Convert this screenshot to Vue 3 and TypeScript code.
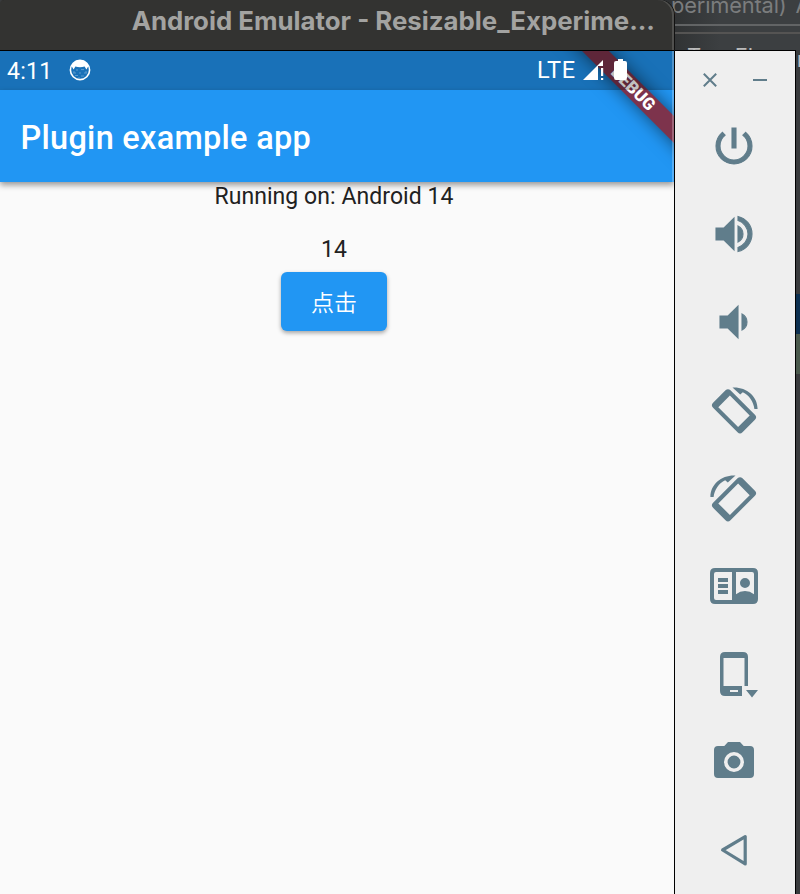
<script setup lang="ts">
interface Tool { name: string; kind: string; path?: string }

const tools: Tool[] = [
  { name: 'Power', kind: 'bold', path: 'M26 6h-4v20h4V6zm9.66 4.34-2.84 2.84C35.98 15.72 38 19.62 38 24c0 7.74-6.26 14-14 14s-14-6.26-14-14c0-4.38 2.02-8.28 5.16-10.84l-2.82-2.82C8.46 13.64 6 18.52 6 24c0 9.94 8.06 18 18 18s18-8.06 18-18c0-5.48-2.46-10.36-6.34-13.66z' },
  { name: 'Volume up', kind: 'bold', path: 'M6 18v12h8l10 10V8L14 18H6zm27 6c0-3.53-2.04-6.58-5-8.05v16.11c2.96-1.48 5-4.53 5-8.06zM28 6.46v4.13c5.78 1.72 10 7.07 10 13.41s-4.22 11.69-10 13.41v4.13c8.01-1.82 14-8.97 14-17.54S36.01 8.28 28 6.46z' },
  { name: 'Volume down', kind: 'bold', path: 'M37 24c0-3.53-2.04-6.58-5-8.05v16.11c2.96-1.48 5-4.53 5-8.06zM10 18v12h8l10 10V8L18 18h-8z' },
  { name: 'Rotate left', kind: 'rotate' },
  { name: 'Rotate right', kind: 'rotate mirrored' },
  { name: 'Display mode', kind: 'plain', path: 'M5 6H43Q48 6 48 11V37Q48 42 43 42H5Q0 42 0 37V11Q0 6 5 6zM6 10Q4 10 4 12V36Q4 38 6 38H22V10zM26 10V32.2Q30 29 35 29Q40 29 44 32.2V12Q44 10 42 10zM8 16H18V20H8zM8 22H18V26H8zM8 28H18V32H8zM35 16A5 5 0 1 1 35 26A5 5 0 1 1 35 16z' },
  { name: 'Device', kind: 'plain', path: 'M15 2H33Q38 2 38 7V36H34.5V8H13.5V36H32V46H15Q10 46 10 41V7Q10 2 15 2zM20 40V42H28V40zM36 40H48L42 47.5z' },
  { name: 'Camera', kind: 'plain', path: 'M18 4H30L33.7 8H40Q44 8 44 12V36Q44 40 40 40H8Q4 40 4 36V12Q4 8 8 8H14.3zM24 14A10 10 0 1 0 24 34A10 10 0 1 0 24 14zM24 17.6A6.4 6.4 0 1 1 24 30.4A6.4 6.4 0 1 1 24 17.6z' },
  { name: 'Back', kind: 'outline', path: 'M12.6 24L35.2 10.6V37.9z' },
]
</script>

<template>
  <div class="desktop">
    <div class="ide-back">
      <div class="ide-title">perimental) A</div>
      <div class="ide-rule"></div>
      <div class="ide-rule second"></div>
      <div class="ide-menu"><span>Tex</span><span>Fl</span></div>
    </div>
    <section class="emulator">
      <header class="titlebar">Android Emulator - Resizable_Experime...</header>
      <div class="screen">
        <div class="status">
          <span class="clock">4:11</span>
          <svg class="cat" viewBox="0 0 22 22">
            <circle cx="11" cy="11" r="9.6" fill="none" stroke="#fff" stroke-width="1.6" />
            <path d="M2.5 7Q5 1 11 1T19.5 7L17.4 10.5L15.6 7.4Q11 9 6.4 7.4L4.6 10.5z" fill="#fff" />
            <path d="M5 12v2M17 12v2M7 11h2M12 10.6h3M4 14h3M10 14h2M15 14h3M6 16.5h3M12 17h3M9 19h2" stroke="#6ba5d3" stroke-width=".8" />
          </svg>
          <span class="lte">LTE</span>
          <svg class="signal" viewBox="0 0 22 21">
            <path d="M0 20L20 0V6H15V20z" fill="#fff" /><path d="M18 8h2.2v8H18zM18 18h2.2v2H18z" fill="#fff" />
          </svg>
          <svg class="battery" viewBox="0 0 14 21"><path d="M4 0H9V2H11Q13 2 13 4V18.5Q13 21 11 21H2Q0 21 0 18.5V4Q0 2 2 2H4z" fill="#fff" /></svg>
        </div>
        <div class="appbar">Plugin example app</div>
        <main class="content">
          <p class="running">Running on: Android 14</p>
          <p class="version">14</p>
          <button class="click">点击</button>
        </main>
        <div class="ribbon"><span>DEBUG</span></div>
        <div class="edge"></div>
      </div>
    </section>
    <aside class="toolbar">
      <div class="window-actions">
        <svg viewBox="0 0 14 14"><path d="M.8.8 13.2 13.2M13.2.8.8 13.2" /></svg>
        <svg viewBox="0 0 14 14"><path d="M0 7H14" /></svg>
      </div>
      <div class="tools">
        <svg v-for="t in tools" :key="t.name" :class="['tool', t.kind]" viewBox="0 0 48 48">
          <path v-if="t.path" :d="t.path" fill-rule="evenodd" />
          <template v-else>
            <g transform="translate(24 25.3) rotate(45)">
              <path fill-rule="evenodd" d="M-17.3-12.3H17.3Q20.8-12.3 20.8-8.8V8.8Q20.8 12.3 17.3 12.3H-17.3Q-20.8 12.3-20.8 8.8V-8.8Q-20.8-12.3-17.3-12.3zM-14-8.2V8.2H14V-8.2z" />
            </g>
            <path d="M22.5 1.6C36 .8 47.5 10 47.6 23H44.4C43.6 15.5 39 9 32.8 6.2L30.2 8.6z" />
          </template>
        </svg>
      </div>
    </aside>
    <div class="ide-side">
      <span class="letter">r</span>
      <div class="selected"></div>
      <div class="added"></div>
    </div>
  </div>
</template>

<style>
body { margin: 0; overflow: hidden; }
</style>

<style scoped>
.desktop { position: relative; display: grid; grid-template-columns: 674px 122px 4px; width: 800px; height: 894px; background: #393b3d; overflow: hidden; font-family: Roboto, sans-serif; }
.ide-back { position: absolute; left: 660px; top: 0; width: 140px; height: 51px; overflow: hidden; background: linear-gradient(90deg, #2d2f30, #3c3f41 60px); }
.ide-title { height: 24px; padding-left: 11px; font: 21.8px/10px Inter, sans-serif; letter-spacing: -.15px; word-spacing: 3px; color: #7b7d7e; white-space: nowrap; }
.ide-rule { height: 2px; background: #626465; }
.ide-rule.second { margin-top: 6px; background: #555453; }
.ide-menu { display: flex; gap: 11px; padding: 10px 0 0 27px; font: 22px/24px Inter, sans-serif; color: #bbb; }
.emulator { position: relative; z-index: 1; height: 894px; display: flex; flex-direction: column; }
.titlebar { box-sizing: border-box; height: 51px; padding: 0 19px 9px 0; border-bottom: 1px solid #000; border-radius: 4px 15px 0 0; box-shadow: inset -2px 0 #50504e, 1px 0 #111; background: #333331; color: #a3a3a1; font: 700 25.8px/41px Inter, sans-serif; text-align: right; white-space: nowrap; }
.screen { position: relative; flex: 1; overflow: hidden; background: linear-gradient(#2196f3 50px, #fafafa 50px); }
.status { position: relative; z-index: 3; display: flex; align-items: center; height: 39px; box-sizing: border-box; padding: 0 46px 0 7px; background: rgba(0, 0, 0, .245); color: #fff; font-size: 23px; }
.clock { width: 62px; padding-top: 1px; letter-spacing: .3px; }
.cat { width: 22px; height: 22px; margin-bottom: 1px; }
.lte { margin-left: auto; width: 46px; padding-bottom: 1px; font-size: 23.5px; letter-spacing: .6px; }
.signal { width: 22px; height: 21px; margin-right: 9px; }
.battery { width: 14px; height: 21px; margin-bottom: 2px; }
.appbar { position: relative; height: 92px; box-sizing: border-box; padding-left: 20.5px; background: #2196f3; color: #fff; font-size: 32.5px; line-height: 96px; font-weight: 500; letter-spacing: .27px; box-shadow: 0 3px 6px rgba(0, 0, 0, .4); }
.content { display: flex; flex-direction: column; align-items: center; width: 668px; padding-top: 1px; color: #212121; font-size: 23px; line-height: 27px; }
p { margin: 0; }
.running { letter-spacing: .06px; }
.version { margin-top: 26px; }
.click { width: 106px; height: 59px; margin-top: 9px; padding: 0; border: 0; border-radius: 6px; background: #2196f3; color: #fff; font: 350 23px/59px "Noto Sans CJK SC", sans-serif; box-shadow: 0 2px 4px rgba(0, 0, 0, .35); }
.ribbon { position: absolute; z-index: 2; left: 543px; top: 28px; width: 180px; height: 19px; background: #7d334c; transform: rotate(45deg); color: #fff; font-size: 17px; line-height: 19px; font-weight: 900; text-align: center; box-shadow: 0 0 17px rgba(0, 0, 0, .55); }
.edge { position: absolute; z-index: 4; right: 0; top: 0; width: 2px; height: 131px; background: rgba(255, 255, 255, .25); }
.toolbar { position: relative; box-sizing: border-box; height: 844px; margin-top: 50px; border: 1px solid #000; border-bottom: 0; background: #efefef; }
.window-actions { display: flex; gap: 36px; padding: 22px 0 0 28px; height: 49px; }
.window-actions svg { width: 14px; height: 14px; fill: none; stroke: #607d8b; stroke-width: 2; }
.tools { display: flex; flex-direction: column; align-items: center; gap: 40px; padding-right: 2px; }
.tool { width: 48px; height: 48px; fill: #607d8b; flex: none; }
.bold { stroke: #607d8b; stroke-width: 1.1; }
.outline { fill: none; stroke: #607d8b; stroke-width: 3.2; stroke-linejoin: round; }
.mirrored { transform: scaleX(-1); }
.ide-side { position: relative; margin-top: 50px; background: #393b3d; }
.letter { display: block; height: 244px; box-sizing: border-box; padding-left: 1px; font-size: 22px; line-height: 20px; color: #bbb; overflow: hidden; }
.selected { height: 40px; background: #0d3050; }
.added { height: 40px; background: #4a594c; }
</style>
